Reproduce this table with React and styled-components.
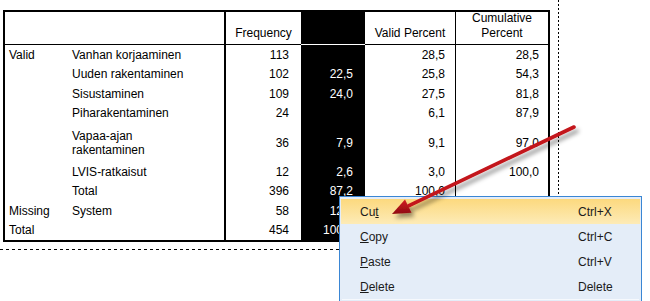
import React from 'react';
import styled, { createGlobalStyle } from 'styled-components';

const GlobalStyle = createGlobalStyle`
  * { box-sizing: border-box; }
  html, body { margin: 0; padding: 0; background: #fff; }
  body { font-family: "Liberation Sans", Arial, sans-serif; }
`;

const Screen = styled.div`
  position: relative;
  width: 650px;
  height: 301px;
  overflow: hidden;
  background: #fff;
`;

// page edge of the output viewer: dotted right edge, dashed bottom edge
const Sheet = styled.div`
  width: 559px;
  height: 250px;
  padding: 10px 0 0 3px;
  background:
    repeating-linear-gradient(to bottom, #000 0 2px, transparent 2px 4px) right top / 1px 100% no-repeat,
    repeating-linear-gradient(to right, #000 0 3px, transparent 3px 6px) left bottom / 100% 1px no-repeat;
`;

const Table = styled.div`
  display: grid;
  width: 547px;
  grid-template-columns: 63px 156px 77px 64px 91px 92px;
  grid-template-rows: 33px repeat(4, 19.5px) 39px repeat(4, 19.5px);
  border: 2px solid #000;
  font-size: 12px;
  color: #000;
`;

const HeadCell = styled.div`
  display: flex;
  align-items: flex-end;
  justify-content: center;
  text-align: center;
  line-height: 15px;
  padding-bottom: 3px;
  border-bottom: 1px solid ${p => (p.$dark ? '#fff' : '#000')};
  ${p => p.$dark && 'background: #000; color: #fff;'}
  ${p => p.$freq && 'border-left: 2px solid #000;'}
  ${p => p.$split && 'border-right: 1px solid #000;'}
`;

const Cell = styled.div`
  display: flex;
  align-items: center;
  justify-content: ${p => (p.$num ? 'flex-end' : 'flex-start')};
  padding: ${p => (p.$num ? `0 ${p.$pad || 11}px 0 0` : '0 0 0 4px')};
  line-height: 14px;
  white-space: pre-line;
  ${p => p.$dark && 'background: #000; color: #fff;'}
  ${p => p.$freq && 'border-left: 2px solid #000;'}
  ${p => p.$split && 'border-right: 1px solid #000;'}
`;

const Menu = styled.div`
  position: absolute;
  left: 339px;
  top: 196px;
  width: 303px;
  height: 120px;
  padding: 2px 1px;
  background: #e4edf8;
  border: 1px solid #3a86d4;
  font-family: "Liberation Sans", Arial, sans-serif;
  font-size: 12px;
  color: #1a1a1a;
`;

const MenuItem = styled.div`
  display: grid;
  grid-template-columns: 218px 1fr;
  align-items: center;
  height: 25px;
  padding-left: 19px;
  ${p => p.$active && 'background: linear-gradient(#fcd97e, #fdebb7);'}
`;

const Separator = styled.div`
  height: 1px;
  margin: 0 1px;
  background: #bfccdd;
  border-bottom: 1px solid #f6f9fd;
`;

const Key = styled.span`
  text-decoration: underline;
`;

const Overlay = styled.svg`
  position: absolute;
  left: 0;
  top: 0;
  pointer-events: none;
`;

const rows = [
  { group: 'Valid', label: 'Vanhan korjaaminen', freq: '113', pct: '', valid: '28,5', cum: '28,5' },
  { label: 'Uuden rakentaminen', freq: '102', pct: '22,5', valid: '25,8', cum: '54,3' },
  { label: 'Sisustaminen', freq: '109', pct: '24,0', valid: '27,5', cum: '81,8' },
  { label: 'Piharakentaminen', freq: '24', pct: '', valid: '6,1', cum: '87,9' },
  { label: 'Vapaa-ajan\nrakentaminen', freq: '36', pct: '7,9', valid: '9,1', cum: '97,0' },
  { label: 'LVIS-ratkaisut', freq: '12', pct: '2,6', valid: '3,0', cum: '100,0' },
  { label: 'Total', freq: '396', pct: '87,2', valid: '100,0', cum: '' },
  { group: 'Missing', label: 'System', freq: '58', pct: '12,8', valid: '', cum: '' },
  { group: 'Total', label: '', freq: '454', pct: '100,0', valid: '', cum: '' },
];

const menu = [
  { pre: 'Cu', key: 't', post: '', short: 'Ctrl+X', active: true },
  { pre: '', key: 'C', post: 'opy', short: 'Ctrl+C' },
  { pre: '', key: 'P', post: 'aste', short: 'Ctrl+V' },
  { pre: '', key: 'D', post: 'elete', short: 'Delete' },
];

const Arrow = () => (
  <Overlay width="650" height="301" viewBox="0 0 650 301">
    <defs>
      <filter id="shadow" x="-10%" y="-20%" width="130%" height="160%">
        <feDropShadow dx="3" dy="4" stdDeviation="2" floodColor="#000" floodOpacity="0.4" />
      </filter>
      <linearGradient id="head" x1="0" y1="0" x2="0" y2="1">
        <stop offset="0" stopColor="#d21d22" />
        <stop offset="1" stopColor="#8e0b10" />
      </linearGradient>
    </defs>
    <g filter="url(#shadow)">
      <line x1="574" y1="127" x2="409" y2="205.6" stroke="#c3141a" strokeWidth="3.6" strokeLinecap="round" />
      <polygon points="392,214 405,199.6 411.5,212.8" fill="url(#head)" />
    </g>
  </Overlay>
);

const App = () => (
  <Screen>
    <GlobalStyle />
    <Sheet>
      <Table>
        <HeadCell />
        <HeadCell />
        <HeadCell $freq>Frequency</HeadCell>
        <HeadCell $dark />
        <HeadCell $split>Valid Percent</HeadCell>
        <HeadCell>Cumulative<br />Percent</HeadCell>
        {rows.map((r, i) => (
          <React.Fragment key={i}>
            <Cell>{r.group || ''}</Cell>
            <Cell>{r.label}</Cell>
            <Cell $num $freq $pad={12}>{r.freq}</Cell>
            <Cell $num $dark $pad={12}>{r.pct}</Cell>
            <Cell $num $split $pad={10}>{r.valid}</Cell>
            <Cell $num $pad={9}>{r.cum}</Cell>
          </React.Fragment>
        ))}
      </Table>
    </Sheet>
    <Menu>
      {menu.map((m, i) => (
        <MenuItem key={i} $active={m.active}>
          <span>{m.pre}<Key>{m.key}</Key>{m.post}</span>
          <span>{m.short}</span>
        </MenuItem>
      ))}
      <Separator />
    </Menu>
    <Arrow />
  </Screen>
);

export default App;
